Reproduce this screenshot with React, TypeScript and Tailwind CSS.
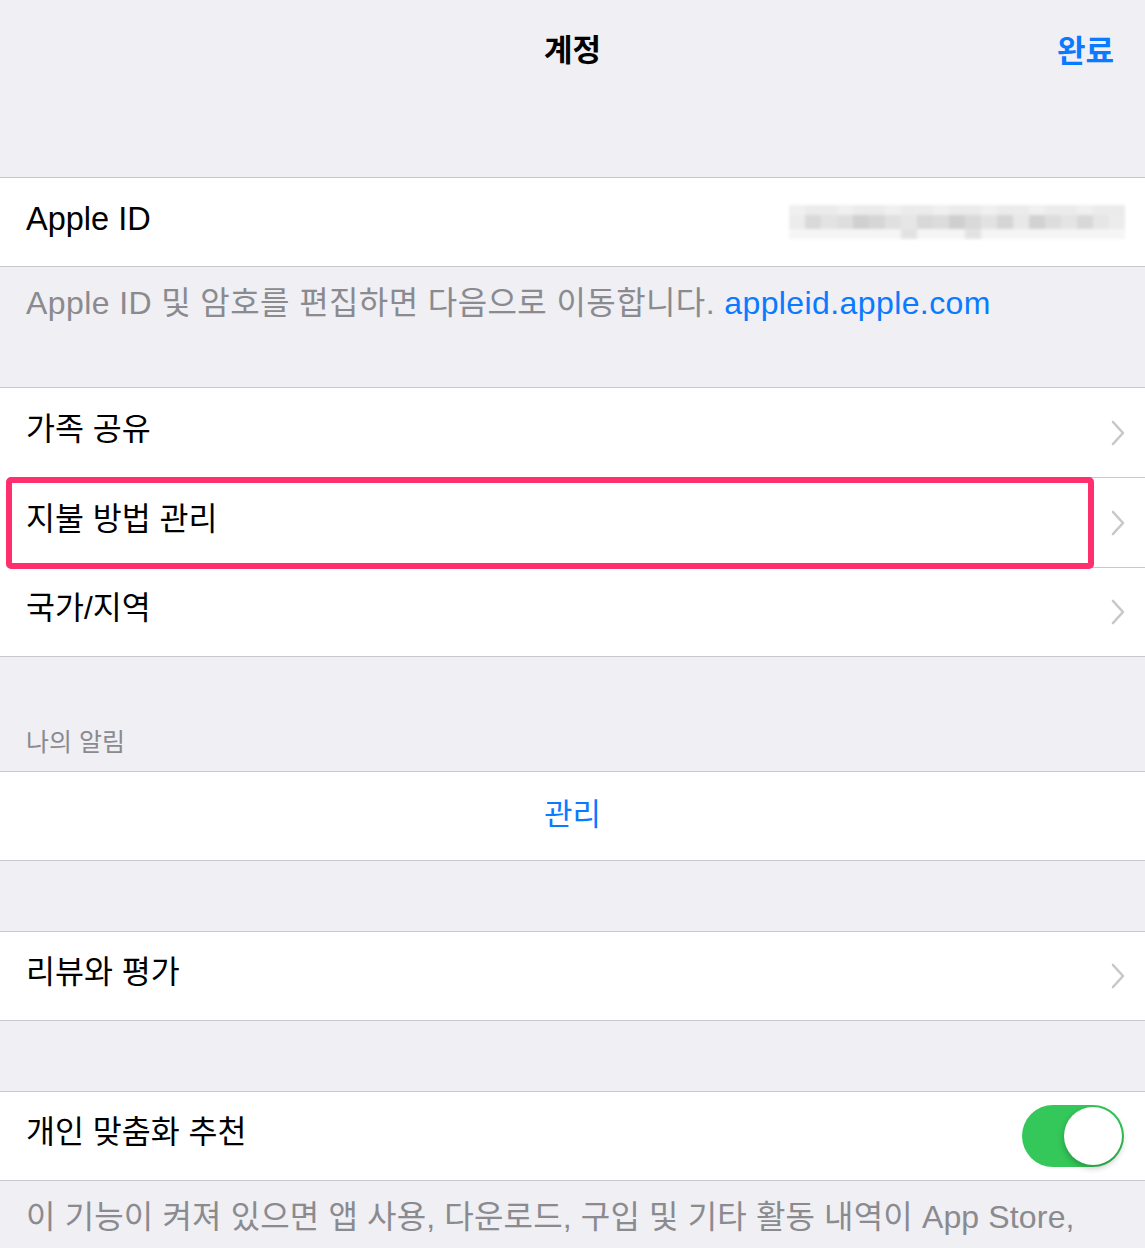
import React from "react";

const FONT = '"Liberation Sans", "Noto Sans CJK KR", sans-serif';

function Chevron() {
  return (
    <svg width="16" height="28" viewBox="0 0 16 28" className="mr-[19px]">
      <polyline points="3,3 13,14 3,25" fill="none" stroke="#c7c7cc" strokeWidth="2.6" strokeLinecap="round" strokeLinejoin="round" />
    </svg>
  );
}

function Row({ label, tall = false, chevron = true }: { label: string; tall?: boolean; chevron?: boolean }) {
  return (
    <div className={`${tall ? "h-[89px]" : "h-[88px]"} flex items-center justify-between bg-white`}>
      <span className="pl-[26px] text-[31.5px] text-black leading-none pb-[6px]">{label}</span>
      {chevron && <Chevron />}
    </div>
  );
}

function Sep() {
  return (
    <div className="bg-white">
      <div className="ml-[26px] h-px bg-[#c8c7cc]" />
    </div>
  );
}

function Blur() {
  const blocks = [
    "#ececec", "#d9d9d9", "#e3e3e3", "#dedede", "#d0d0d0", "#d6d6d6", "#e0e0e0", "#e6e6e6", "#d8d8d8", "#dcdcdc",
    "#cfcfcf", "#d9d9d9", "#e2e2e2", "#d5d5d5", "#e8e8e8", "#d2d2d2", "#dddddd", "#e4e4e4", "#d8d8d8", "#e6e6e6", "#ececec",
  ];
  return (
    <div className="mr-[20px] flex flex-col blur-[1.5px]">
      <div className="flex h-[10px]">
        {blocks.map((c, i) => (
          <div key={i} className="w-[16px]" style={{ background: i % 3 === 0 ? "#f0f0f0" : "#ebebeb" }} />
        ))}
      </div>
      <div className="flex h-[14px]">
        {blocks.map((c, i) => (
          <div key={i} className="w-[16px]" style={{ background: c }} />
        ))}
      </div>
      <div className="flex h-[10px]">
        {blocks.map((c, i) => (
          <div key={i} className="w-[16px]" style={{ background: i === 7 || i === 11 ? "#e2e2e2" : "#f5f5f5" }} />
        ))}
      </div>
    </div>
  );
}

export default function App() {
  return (
    <div className="w-[1145px] min-h-[1248px] bg-[#efeff4] overflow-hidden" style={{ fontFamily: FONT }}>
      {/* Nav */}
      <div className="h-[177px]">
        <div className="h-[100px] relative flex items-center justify-center">
          <span className="text-[31px] font-bold text-black leading-none">계정</span>
          <span className="absolute right-[31px] top-[36px] text-[31px] font-semibold text-[#0a7aff] leading-none">완료</span>
        </div>
      </div>

      {/* Apple ID */}
      <div className="border-y border-[#c8c7cc]">
        <div className="h-[88px] flex items-center justify-between bg-white">
          <span className="pl-[26px] text-[32.5px] text-black leading-none pb-[6px]">Apple ID</span>
          <Blur />
        </div>
      </div>
      <div className="h-[120px] pl-[26px] pt-[17px] text-[32px] tracking-[0.4px] text-[#8a8a8f] leading-[38px] whitespace-nowrap">
        Apple ID 및 암호를 편집하면 다음으로 이동합니다. <span className="text-[#0a7aff]">appleid.apple.com</span>
      </div>

      {/* Group 2 */}
      <div className="relative border-y border-[#c8c7cc]">
        <Row label="가족 공유" tall />
        <Sep />
        <Row label="지불 방법 관리" tall />
        <Sep />
        <Row label="국가/지역" />
        <div className="absolute left-[6px] top-[89px] w-[1088px] h-[92px] border-[6px] border-[#fe2f6c] rounded-[5px]" />
      </div>

      {/* Section header */}
      <div className="h-[114px] flex items-end pl-[26px] pb-[16px]">
        <span className="text-[25px] text-[#8a8a8f] leading-none">나의 알림</span>
      </div>
      <div className="border-y border-[#c8c7cc]">
        <div className="h-[88px] flex items-center justify-center bg-white">
          <span className="text-[31px] text-[#0a7aff] leading-none pb-[4px]">관리</span>
        </div>
      </div>

      <div className="h-[70px]" />
      <div className="border-y border-[#c8c7cc]">
        <Row label="리뷰와 평가" />
      </div>

      <div className="h-[70px]" />
      <div className="border-y border-[#c8c7cc]">
        <div className="h-[88px] flex items-center justify-between bg-white">
          <span className="pl-[26px] text-[31.5px] text-black leading-none pb-[6px]">개인 맞춤화 추천</span>
          <div className="mr-[21px] w-[102px] h-[62px] rounded-full bg-[#34c759] relative">
            <div className="absolute right-[2px] top-[2px] w-[58px] h-[58px] rounded-full bg-white shadow-[0_3px_6px_rgba(0,0,0,0.25)]" />
          </div>
        </div>
      </div>
      <div className="pl-[26px] pt-[17px] pr-[20px] text-[32px] tracking-[0.15px] text-[#8a8a8f] leading-[38px] whitespace-nowrap">
        이 기능이 켜져 있으면 앱 사용, 다운로드, 구입 및 기타 활동 내역이 App Store,
      </div>
    </div>
  );
}
